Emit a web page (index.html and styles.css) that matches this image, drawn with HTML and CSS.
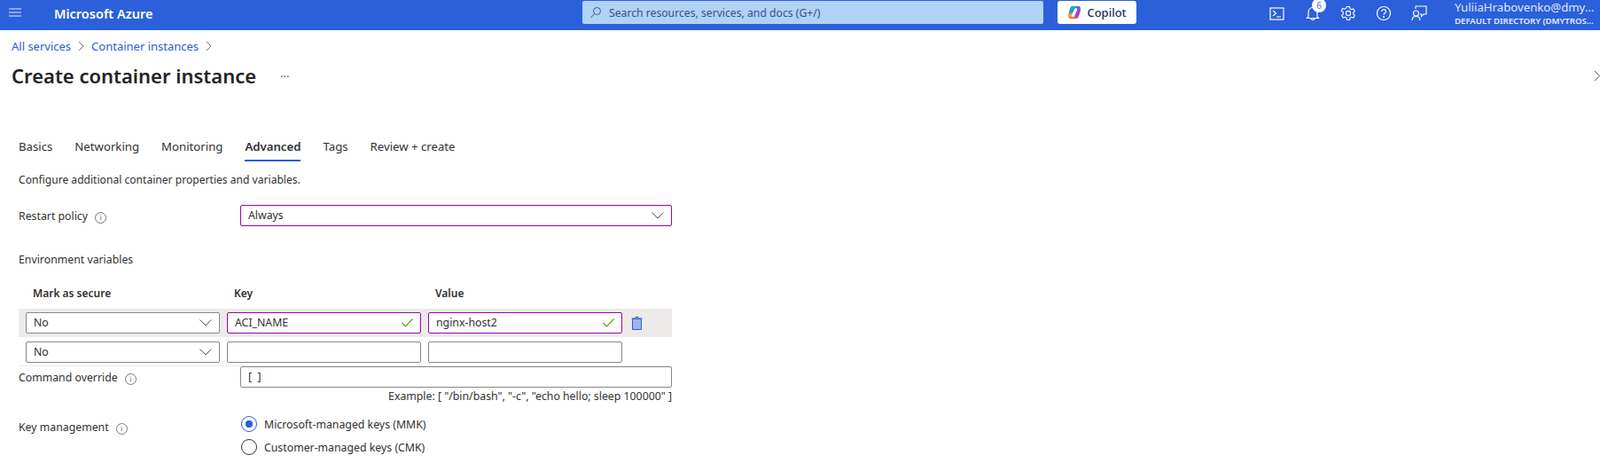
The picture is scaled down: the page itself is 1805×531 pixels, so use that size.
FILE: index.html
```html
<!doctype html>
<html lang='en-US'>
  <head>
    <title>Create container instance - Microsoft Azure</title>
    <meta charset='UTF-8'>
    <link rel="stylesheet" href="styles.css">
  </head>
  <body>
<header class=topbar>
  <svg class=burger width=14 height=10 viewBox="0 0 14 10"><path d="M0 1h14M0 5h14M0 9h14" stroke="#a9bff2" stroke-width=1.6 /></svg>
  <span class=brand>Microsoft Azure</span>
  <div class=search>
    <svg width=14 height=14 viewBox="0 0 14 14" fill=none stroke="#3d5796"><circle cx=8.5 cy=5.5 r=4 /><path d="M5.6 8.4 1.5 13"/></svg>
    <span>Search resources, services, and docs (G+/)</span>
  </div>
  <button class=copilot>
    <svg width=16 height=16 viewBox="0 0 16 16">
      <defs>
        <linearGradient id=cpbase x1=0 y1=0 x2=0 y2=1>
          <stop offset=0 stop-color="#12b8a0"/>
          <stop offset=.45 stop-color="#2f8fe8"/>
          <stop offset=.75 stop-color="#f7b52c"/>
          <stop offset=1 stop-color="#f0603c"/>
        </linearGradient>
        <linearGradient id=cpside x1=0 y1=0 x2=0 y2=1>
          <stop offset=0 stop-color="#4a6ff0"/>
          <stop offset=.5 stop-color="#a03fd8"/>
          <stop offset=1 stop-color="#ee3f8a"/>
        </linearGradient>
      </defs>
      <path d="M5 1h7c2.300 0 3.500 2 3 4l-2 7c-.5 2-2 3-4 3H4c-2.300 0-3.500-2-3-4l2-7c.5-2 1-3 2-3z" fill="url(#cpbase)"/>
      <path d="M10 1h2c2.300 0 3.500 2 3 4l-2 7c-.5 2-2 3-4 3H8z" fill="url(#cpside)"/>
      <path d="M9.800 4.500 6.500 11.500" stroke=white stroke-width=3 stroke-linecap=round />
    </svg>
    Copilot
  </button>
  <nav class=tools>
    <svg width=18 height=15 viewBox="0 0 18 15" fill=none stroke=white stroke-width=1.2><rect x=1 y=1 width=15 height=13 /><path d="M4 4l3.500 3L4 10M8 11h5"/></svg>
    <span class=bell>
      <svg width=18 height=18 viewBox="0 0 18 18" fill=none stroke=white stroke-width=1.2><path d="M4 13V8c0-3 2-5.500 5-5.500S14 5 14 8v5l1.500 1.500h-13zM7 14.500c0 2.500 4 2.500 4 0"/></svg>
      <b class=badge>6</b>
    </span>
    <svg width=18 height=18 viewBox="0 0 18 18" fill=none stroke=white stroke-width=1.1><circle cx=9 cy=9 r=2.600 /><path d="M7.500 1.500h3l.5 2.200 1.700 1 2.100-.7 1.500 2.600-1.600 1.500v1.800l1.600 1.500-1.500 2.600-2.100-.7-1.700 1-.5 2.200h-3l-.5-2.200-1.700-1-2.100.7-1.500-2.600 1.600-1.500V7.600L1.200 6.100l1.500-2.600 2.100.7 1.700-1z"/></svg>
    <svg width=18 height=18 viewBox="0 0 18 18" fill=none stroke=white stroke-width=1.200><circle cx=9 cy=9 r=7.500 /><path d="M6.700 7c0-3 4.800-3 4.800-.2 0 1.900-2.500 1.900-2.500 4"/><circle cx=9 cy=13 r=.5 fill=white /></svg>
    <svg width=18 height=18 viewBox="0 0 18 18" fill=none stroke=white stroke-width=1.100><path d="M5 4V1h12v9h-3l-2.500 2.500V10H10"/><circle cx=5.500 cy=9 r=3 /><path d="M1 17c0-6 9-6 9 0"/></svg>
  </nav>
  <div class=account>
    <span>YuliiaHrabovenko@dmy...</span>
    <small>DEFAULT DIRECTORY (DMYTROS...</small>
  </div>
</header>

<main>
  <div class=crumbs>
    <a>All services</a>
    <svg class=chev width=7 height=12 viewBox="0 0 7 12" fill=none stroke="#777"><path d="M1 1l5 5-5 5"/></svg>
    <a>Container instances</a>
    <svg class=chev width=7 height=12 viewBox="0 0 7 12" fill=none stroke="#777"><path d="M1 1l5 5-5 5"/></svg>
  </div>
  <div class=titlerow>
    <h1>Create container instance</h1>
    <span class=dots>...</span>
    <svg class=collapse width=7 height=13 viewBox="0 0 7 13" fill=none stroke="#555"><path d="M1 1l5.500 5.500L1 12"/></svg>
  </div>

  <ul class=tabs>
    <li>Basics</li>
    <li>Networking</li>
    <li>Monitoring</li>
    <li class=active>Advanced</li>
    <li>Tags</li>
    <li>Review + create</li>
  </ul>

  <form class=panel>
    <p class=intro>Configure additional container properties and variables.</p>

    <div class=row>
      <label>Restart policy <i class=info>i</i></label>
      <div class="box edited select">Always
        <svg width=14 height=8 viewBox="0 0 14 8" fill=none stroke="#555"><path d="M.5.500 7 7 13.500.500"/></svg>
      </div>
    </div>

    <p class=envtitle>Environment variables</p>
    <div class=envhead>
      <span>Mark as secure</span>
      <span>Key</span>
      <span>Value</span>
    </div>
    <div class="envrow filled">
      <div class="box select">No
        <svg width=14 height=8 viewBox="0 0 14 8" fill=none stroke="#555"><path d="M.5.500 7 7 13.500.500"/></svg>
      </div>
      <div class="box edited">ACI_NAME
        <svg width=13 height=10 viewBox="0 0 13 10" fill=none stroke="#57a300" stroke-width=1.100><path d="M.5 5l4 4 8-8.500"/></svg>
      </div>
      <div class="box edited">nginx-host2
        <svg width=13 height=10 viewBox="0 0 13 10" fill=none stroke="#57a300" stroke-width=1.100><path d="M.5 5l4 4 8-8.500"/></svg>
      </div>
      <svg class=trash width=13 height=16 viewBox="0 0 13 16"><path d="M4.500 1.500h4M.5 3h12" stroke="#2b60da" fill=none /><path d="M1.500 3.500h10V15.500h-10z" fill="#9fb4ea" stroke="#2b60da"/></svg>
    </div>
    <div class=envrow>
      <div class="box select">No
        <svg width=14 height=8 viewBox="0 0 14 8" fill=none stroke="#555"><path d="M.5.500 7 7 13.500.500"/></svg>
      </div>
      <div class=box></div>
      <div class=box></div>
    </div>

    <div class="row cmd">
      <label>Command override <i class=info>i</i></label>
      <div class=box>[ &nbsp;]</div>
    </div>
    <p class=hint>Example: [ "/bin/bash", "-c", "echo hello; sleep 100000" ]</p>

    <div class="row keys">
      <label>Key management <i class=info>i</i></label>
      <div class=radios>
        <span class="radio on">Microsoft-managed keys (MMK)</span>
        <span class=radio>Customer-managed keys (CMK)</span>
      </div>
    </div>
  </form>
</main>
  </body>
</html>
```

FILE: styles.css
```css
html, body {
  font-size: 13px;
  font-family: "Noto Sans", sans-serif;
  color: #323130;
}
body {
  margin: 0;
  height: 531px;
  overflow: hidden;
  background: white;
}
p {
  margin: 0;
}

/* top bar */
.topbar {
  height: 34px;
  background: #2b60da;
  display: flex;
  align-items: flex-start;
  color: white;
  white-space: nowrap;
}
.topbar > * {
  flex-shrink: 0;
}
.burger {
  margin: 9px 0 0 10px;
}
.brand {
  margin-left: 37px;
  flex: 0 0 596px;
  line-height: 30px;
  font-size: 14.5px;
  font-weight: 600;
}
.search {
  margin-top: 1px;
  flex: 0 0 520px;
  height: 26px;
  background: #b0d2f5;
  border-radius: 2px;
  display: flex;
  align-items: center;
  gap: 8px;
  padding-left: 8px;
  box-sizing: border-box;
  font-size: 12.2px;
  color: #3a4f86;
}
.copilot {
  margin: 1px 0 0 16px;
  flex: 0 0 89px;
  height: 26px;
  background: white;
  border: 0;
  border-radius: 3px;
  font: 500 13px "Noto Sans", sans-serif;
  color: #242c5a;
  display: flex;
  align-items: center;
  justify-content: center;
  gap: 6px;
  padding: 0;
}
.tools {
  margin: 6px 0 0 150px;
  display: flex;
  align-items: center;
  gap: 22px;
}
.bell {
  position: relative;
  display: flex;
}
.badge {
  position: absolute;
  top: -8px;
  left: 8px;
  width: 16px;
  height: 16px;
  border-radius: 50%;
  background: white;
  color: #5f83e4;
  font-size: 10px;
  font-weight: 500;
  line-height: 16px;
  text-align: center;
}
.account {
  margin-left: 31px;
  display: flex;
  flex-direction: column;
  line-height: 15px;
  padding-top: 1px;
  font-size: 13.2px;
  color: #dfe8fb;
}
.account small {
  font-size: 9.6px;
  font-weight: 600;
  color: #e6edfb;
}

/* blade header */
.crumbs {
  display: flex;
  align-items: center;
  margin: 9px 0 0 13px;
  height: 18px;
  gap: 8px;
}
.crumbs a {
  color: #2b60da;
}
.titlerow {
  display: flex;
  align-items: center;
  height: 30px;
  margin: 9px 0 0 13px;
}
h1 {
  margin: 0;
  font-size: 22px;
  font-weight: 600;
  color: #242424;
}
.dots {
  margin: -6px 0 0 27px;
  color: #555;
}
.collapse {
  margin-left: auto;
}

/* tabs */
.tabs {
  list-style: none;
  display: flex;
  gap: 25px;
  margin: 50px 0 0 21px;
  padding: 0;
  height: 32px;
  font-size: 13.2px;
}
.tabs li {
  height: 30px;
  line-height: 30px;
}
.tabs .active {
  font-weight: 600;
  border-bottom: 2px solid #2b60da;
}

/* form */
.panel {
  margin-left: 21px;
  width: 737px;
  font-size: 12.3px;
}
.intro {
  margin-top: 12px;
  line-height: 18px;
  font-size: 12.1px;
}
.row {
  display: grid;
  grid-template-columns: 250px 1fr;
  align-items: center;
  margin-top: 19px;
}
.info {
  display: inline-block;
  width: 11px;
  height: 11px;
  margin-left: 5px;
  border: 1px solid #777;
  border-radius: 50%;
  font: 9px/11px "Liberation Serif", serif;
  text-align: center;
  color: #666;
}
.box {
  height: 24px;
  box-sizing: border-box;
  border: 1px solid #8a8886;
  border-radius: 2px;
  background: white;
  padding: 0 8px;
  display: flex;
  align-items: center;
  justify-content: space-between;
  line-height: 20px;
}
.box.edited {
  border-color: #a100b0;
}
.envtitle {
  margin-top: 29px;
  line-height: 18px;
}
.envhead {
  display: grid;
  grid-template-columns: 227px 227px auto;
  padding-left: 16px;
  margin-top: 20px;
  height: 17px;
  line-height: 17px;
  font-weight: 600;
  font-size: 12px;
}
.envrow {
  display: grid;
  grid-template-columns: 219px 219px 219px auto;
  gap: 8px;
  padding-left: 8px;
  align-items: center;
  height: 24px;
  margin-top: 5px;
}
.envrow.filled {
  height: 32px;
  background: #edebe9;
  margin-top: 9px;
}
.trash {
  margin-left: 2px;
}
.row.cmd {
  margin-top: 3px;
  border-top: 1px solid #edebe9;
}
.hint {
  text-align: right;
  line-height: 18px;
  margin-top: 1px;
}
.row.keys {
  margin-top: 13px;
  align-items: start;
}
.row.keys label {
  margin-top: 4px;
}
.radios {
  display: flex;
  flex-direction: column;
  gap: 8px;
  margin-left: 1px;
}
.radio {
  display: flex;
  align-items: center;
  gap: 8px;
  height: 18px;
}
.radio::before {
  content: '';
  width: 16px;
  height: 16px;
  border: 1px solid #323130;
  border-radius: 50%;
  background: white;
}
.radio.on::before {
  border-color: #2b60da;
  background: radial-gradient(circle, #2b60da 0 4px, white 4.5px);
}
```
